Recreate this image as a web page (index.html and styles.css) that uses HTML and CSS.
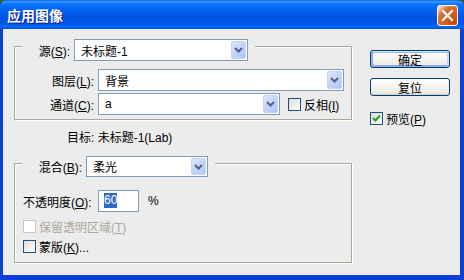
FILE: index.html
```html
<!DOCTYPE html>
<html lang="zh-CN">

  <head>
    <meta charset="UTF-8">
    <title>应用图像</title>
    <link rel="stylesheet" href="styles.css">
  </head>

  <body>
    <div class="window">
      <div class="titlebar">
        <span class="title">应用图像</span>
        <div class="close-btn">
          <svg width="13" height="13" viewBox="0 0 13 13">
            <path d="M2 2 L11 11 M11 2 L2 11" stroke="#fff" stroke-width="2.2" stroke-linecap="square"/>
          </svg>
        </div>
      </div>

      <div class="client">
        <div class="left">
          <!-- source group -->
          <div class="group source-group">
            <div class="legend">
              <span class="label source-label">源(<u>S</u>):</span>
              <div class="select source-select">
                <span class="select-text">未标题-1</span>
                <span class="arrow"><svg width="9" height="6" viewBox="0 0 9 6"><path d="M1 1 L4.5 4.5 L8 1" fill="none" stroke="#4d6185" stroke-width="2"/></svg></span>
              </div>
            </div>
            <div class="row first-row">
              <span class="label row-label">图层(<u>L</u>):</span>
              <div class="select layer-select">
                <span class="select-text">背景</span>
                <span class="arrow"><svg width="9" height="6" viewBox="0 0 9 6"><path d="M1 1 L4.5 4.5 L8 1" fill="none" stroke="#4d6185" stroke-width="2"/></svg></span>
              </div>
            </div>
            <div class="row">
              <span class="label row-label">通道(<u>C</u>):</span>
              <div class="select channel-select">
                <span class="select-text">a</span>
                <span class="arrow"><svg width="9" height="6" viewBox="0 0 9 6"><path d="M1 1 L4.5 4.5 L8 1" fill="none" stroke="#4d6185" stroke-width="2"/></svg></span>
              </div>
              <div class="check invert-check">
                <span class="box"></span>
                <span>反相(<u>I</u>)</span>
              </div>
            </div>
          </div>

          <p class="target">目标: 未标题-1(Lab)</p>

          <!-- blend group -->
          <div class="group blend-group">
            <div class="legend">
              <span class="label blend-label">混合(<u>B</u>):</span>
              <div class="select blend-select">
                <span class="select-text">柔光</span>
                <span class="arrow"><svg width="9" height="6" viewBox="0 0 9 6"><path d="M1 1 L4.5 4.5 L8 1" fill="none" stroke="#4d6185" stroke-width="2"/></svg></span>
              </div>
            </div>
            <div class="opacity-row">
              <span class="opacity-label">不透明度(<u>O</u>):</span>
              <div class="text-input"><span class="selected">60</span></div>
              <span class="percent">%</span>
            </div>
            <div class="check check-row disabled">
              <span class="box"></span>
              <span>保留透明区域(<u>T</u>)</span>
            </div>
            <div class="check check-row">
              <span class="box"></span>
              <span>蒙版(<u>K</u>)...</span>
            </div>
          </div>
        </div>

        <div class="right">
          <div class="btn btn-default">确定</div>
          <div class="btn">复位</div>
          <div class="check preview-check">
            <span class="box">
              <svg width="11" height="11" viewBox="0 0 11 11"><path d="M2 5 L4.3 7.5 L9 2.5" fill="none" stroke="#21a121" stroke-width="2"/></svg>
            </span>
            <span>预览(<u>P</u>)</span>
          </div>
        </div>
      </div>
    </div>
  </body>

</html>
```

FILE: styles.css
```css
body {
  margin: 0;
  background-color: #2f5a3c;
  font-family: 'Liberation Sans', 'Noto Sans CJK SC', sans-serif;
  font-size: 12px;
  color: #000;
}

u {
  text-underline-offset: 1px;
}

/* Window frame */
.window {
  width: 464px;
  height: 280px;
  background-color: #0b3fd8;
  border-radius: 7px 7px 0 0;
  display: flex;
  flex-direction: column;
  overflow: hidden;
}

.titlebar {
  height: 29px;
  flex-shrink: 0;
  box-sizing: border-box;
  padding: 1px 6px 0 7px;
  display: flex;
  align-items: center;
  justify-content: space-between;
  background: linear-gradient(180deg, #0058ee 0%, #3a93ff 4%, #288eff 8%, #127dff 12%, #036ffc 20%, #0262ee 38%, #0057e5 54%, #0054e3 60%, #0055eb 76%, #005bf5 86%, #026afe 92%, #0062ef 94%, #0052d6 100%);
}

.title {
  color: #fff;
  font-family: 'Noto Sans CJK SC', sans-serif;
  font-size: 14px;
  font-weight: bold;
  text-shadow: 1px 1px #0a1883;
}

.close-btn {
  width: 21px;
  height: 21px;
  box-sizing: border-box;
  border: 1px solid #fff;
  border-radius: 3px;
  display: flex;
  justify-content: center;
  align-items: center;
  background: radial-gradient(circle at 90% 90%, #cc4600 0%, #dc6527 55%, #cd7546 70%, #ffccb2 90%, #fff 100%);
}

.client {
  flex: 1;
  margin: 0 4px 5px 3px;
  background-color: #ececec;
  display: flex;
  gap: 17px;
  padding: 17px 0 0 11px;
}

.left {
  width: 339px;
}

/* Etched group boxes */
.group {
  width: 338px;
  box-sizing: border-box;
  border: 1px solid #aca899;
  box-shadow: inset 1px 1px 0 #fff, 1px 1px 0 #fff;
}

.legend {
  width: max-content;
  margin: -8px 0 0 7px;
  padding-right: 7px;
  display: flex;
  align-items: center;
  gap: 4px;
  background-color: #ececec;
}

.label {
  text-align: right;
}

.source-label {
  width: 48px;
}

.blend-label {
  width: 60px;
}

.row-label {
  width: 79px;
}

.source-group {
  padding-bottom: 4px;
}

.row {
  display: flex;
  align-items: center;
  gap: 4px;
  margin-top: 2px;
}

.row.first-row {
  margin-top: 8px;
}

/* Combo boxes */
.select {
  height: 22px;
  box-sizing: border-box;
  border: 1px solid #7f9db9;
  background-color: #fff;
  display: flex;
  align-items: center;
  padding: 1px;
}

.select-text {
  flex: 1;
  padding-left: 5px;
}

.arrow {
  width: 15px;
  height: 100%;
  box-sizing: border-box;
  border: 1px solid #c3d3fd;
  border-radius: 2px;
  background: linear-gradient(135deg, #dce6fd 0%, #c4d4fa 50%, #b1c6f6 100%);
  display: flex;
  justify-content: center;
  align-items: center;
}

.source-select {
  width: 174px;
}

.layer-select {
  width: 246px;
}

.channel-select {
  width: 182px;
}

.blend-select {
  width: 122px;
  height: 21px;
}

/* Checkboxes */
.check {
  display: flex;
  align-items: center;
  gap: 3px;
}

.box {
  width: 13px;
  height: 13px;
  box-sizing: border-box;
  border: 1px solid #1c5180;
  background: linear-gradient(135deg, #dcdcd7 0%, #fff 100%);
  display: flex;
  justify-content: center;
  align-items: center;
}

.check.disabled {
  color: #aca899;
}

.check.disabled .box {
  border-color: #cac8bb;
  background: #fff;
}

.invert-check {
  margin-left: 4px;
}

.target {
  margin: 10px 0 0 53px;
  line-height: 16px;
}

.blend-group {
  margin-top: 17px;
  padding-bottom: 6px;
}

.opacity-row {
  display: flex;
  align-items: center;
  margin-top: 13px;
  padding-left: 8px;
  height: 22px;
}

.opacity-label {
  width: 75px;
}

.text-input {
  width: 41px;
  height: 22px;
  box-sizing: border-box;
  border: 1px solid #7f9db9;
  background-color: #fff;
  padding: 2px 0 0 5px;
}

.selected {
  background-color: #316ac5;
  color: #fff;
  display: inline-block;
  line-height: 15px;
}

.percent {
  margin-left: 9px;
}

.check-row {
  height: 20px;
  padding-left: 8px;
}

.opacity-row + .check-row {
  margin-top: 4px;
}

/* Buttons */
.right {
  width: 80px;
  padding-top: 4px;
  display: flex;
  flex-direction: column;
}

.btn {
  height: 18px;
  box-sizing: border-box;
  border: 1px solid #003c74;
  border-radius: 3px;
  background: linear-gradient(180deg, #fff 0%, #ecebe6 86%, #d6d0c5 100%);
  display: flex;
  justify-content: center;
  align-items: center;
  margin-bottom: 10px;
}

.btn-default {
  box-shadow: inset -1px 1px #cee7ff, inset 1px 2px #98b8ea, inset -2px 2px #bcd4f6, inset 1px -1px #89ade4, inset 2px -2px #89ade4;
}

.preview-check {
  height: 20px;
  margin-top: 2px;
}
```
